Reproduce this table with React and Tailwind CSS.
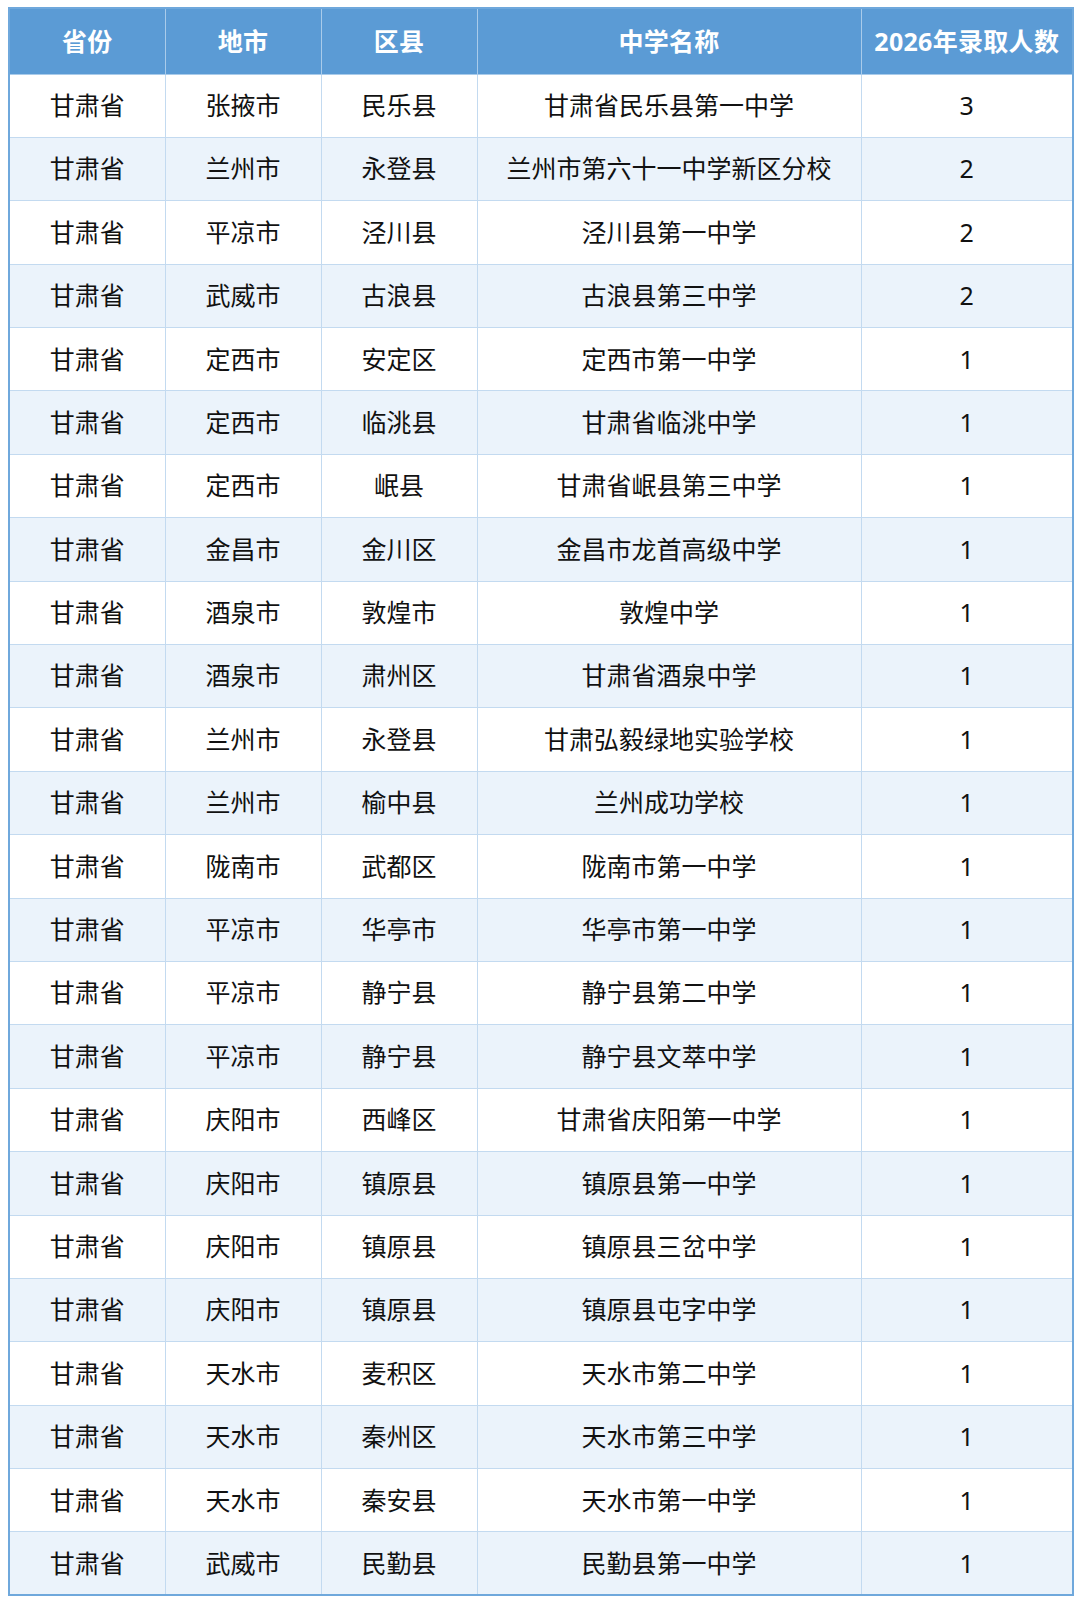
const rows = [
  ["甘肃省", "张掖市", "民乐县", "甘肃省民乐县第一中学", "3"],
  ["甘肃省", "兰州市", "永登县", "兰州市第六十一中学新区分校", "2"],
  ["甘肃省", "平凉市", "泾川县", "泾川县第一中学", "2"],
  ["甘肃省", "武威市", "古浪县", "古浪县第三中学", "2"],
  ["甘肃省", "定西市", "安定区", "定西市第一中学", "1"],
  ["甘肃省", "定西市", "临洮县", "甘肃省临洮中学", "1"],
  ["甘肃省", "定西市", "岷县", "甘肃省岷县第三中学", "1"],
  ["甘肃省", "金昌市", "金川区", "金昌市龙首高级中学", "1"],
  ["甘肃省", "酒泉市", "敦煌市", "敦煌中学", "1"],
  ["甘肃省", "酒泉市", "肃州区", "甘肃省酒泉中学", "1"],
  ["甘肃省", "兰州市", "永登县", "甘肃弘毅绿地实验学校", "1"],
  ["甘肃省", "兰州市", "榆中县", "兰州成功学校", "1"],
  ["甘肃省", "陇南市", "武都区", "陇南市第一中学", "1"],
  ["甘肃省", "平凉市", "华亭市", "华亭市第一中学", "1"],
  ["甘肃省", "平凉市", "静宁县", "静宁县第二中学", "1"],
  ["甘肃省", "平凉市", "静宁县", "静宁县文萃中学", "1"],
  ["甘肃省", "庆阳市", "西峰区", "甘肃省庆阳第一中学", "1"],
  ["甘肃省", "庆阳市", "镇原县", "镇原县第一中学", "1"],
  ["甘肃省", "庆阳市", "镇原县", "镇原县三岔中学", "1"],
  ["甘肃省", "庆阳市", "镇原县", "镇原县屯字中学", "1"],
  ["甘肃省", "天水市", "麦积区", "天水市第二中学", "1"],
  ["甘肃省", "天水市", "秦州区", "天水市第三中学", "1"],
  ["甘肃省", "天水市", "秦安县", "天水市第一中学", "1"],
  ["甘肃省", "武威市", "民勤县", "民勤县第一中学", "1"],
];

const headers = ["省份", "地市", "区县", "中学名称", "2026年录取人数"];

export default function App() {
  return (
    <div
      className="bg-white min-h-[1603px] pl-[8px] pt-[7px]"
      style={{ fontFamily: '"Noto Sans", "Noto Sans CJK SC", sans-serif' }}
    >
      <table className="table-fixed border-collapse w-[1064px] border-2 border-[#6fa8dc] text-[25px] text-[#111]">
        <colgroup>
          <col className="w-[156px]" />
          <col className="w-[156px]" />
          <col className="w-[156px]" />
          <col className="w-[384px]" />
          <col className="w-[212px]" />
        </colgroup>
        <thead>
          <tr className="h-[66px] bg-[#5b9bd5]">
            {headers.map((h) => (
              <th
                key={h}
                className="border border-[#a9cbea] text-white font-bold text-center align-middle p-0 text-[25px] tracking-[0.3px]"
              >
                {h}
              </th>
            ))}
          </tr>
        </thead>
        <tbody>
          {rows.map((r, i) => (
            <tr
              key={i}
              className={`h-[63.4px] ${i % 2 === 1 ? "bg-[#ebf3fb]" : "bg-white"}`}
            >
              {r.map((c, j) => (
                <td
                  key={j}
                  className="border border-[#c3daf0] text-center align-middle p-0"
                >
                  {c}
                </td>
              ))}
            </tr>
          ))}
        </tbody>
      </table>
    </div>
  );
}
